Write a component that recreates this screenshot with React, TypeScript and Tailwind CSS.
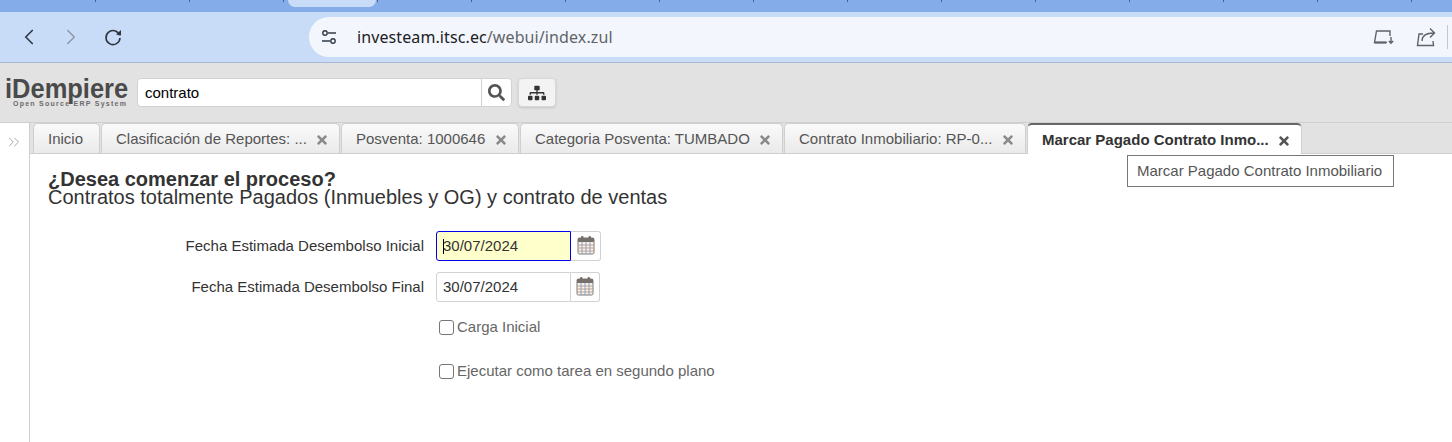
import { ChevronLeft, ChevronRight, ChevronsRight } from "lucide-react";
import { FaSearch, FaSitemap, FaTimes } from "react-icons/fa";

const ticks = [0, 1, 2, 3, 4, 5, 6, 7, 8, 9, 10, 11, 12, 13, 14];

const tabs = [
  { label: "Inicio", width: "w-[67px]", close: false },
  { label: "Clasificación de Reportes: ...", width: "w-[239px]", close: true },
  { label: "Posventa: 1000646", width: "w-[178px]", close: true },
  { label: "Categoria Posventa: TUMBADO", width: "w-[263px]", close: true },
  { label: "Contrato Inmobiliario: RP-0...", width: "w-[242px]", close: true },
];

const CalendarIcon = () => (
  <svg width="18" height="20" viewBox="0 0 18 20" className="mb-[3px]">
    <rect x="1" y="3" width="16" height="16" rx="1.5" fill="#f6f1ea" stroke="#7b7b7b" />
    <rect x="1" y="3" width="16" height="4" fill="#77706a" />
    <rect x="4" y="1" width="2.5" height="4.5" rx="1" fill="#77706a" />
    <rect x="11.5" y="1" width="2.5" height="4.5" rx="1" fill="#77706a" />
    <path d="M1 10h16M1 13h16M1 16h16" stroke="#c59a7a" strokeWidth="0.9" />
    <path d="M5 7v12M9 7v12M13 7v12" stroke="#7f9cc4" strokeWidth="0.9" />
  </svg>
);

const ReloadIcon = () => (
  <svg width="20" height="20" viewBox="0 0 20 20" fill="none">
    <path d="M16.6 8.2A7 7 0 1 0 17 11" stroke="#2f3640" strokeWidth="1.6" />
    <path d="M13 7.5 18 3v5.5z" fill="#2f3640" />
  </svg>
);

const TuneIcon = () => (
  <svg width="16" height="16" viewBox="0 0 16 16" fill="none" stroke="#333b47" strokeWidth="1.4">
    <circle cx="4" cy="4" r="2.2" />
    <path d="M7 4h8M1 12h8" />
    <circle cx="12" cy="12" r="2.2" />
  </svg>
);

const InstallIcon = () => (
  <svg width="22" height="16" viewBox="0 0 22 16" fill="none" stroke="#5f6368" strokeWidth="1.4">
    <path d="M17 7V2H3.5L1.5 13.5H14" />
    <path d="M1.5 13.5H13" strokeWidth="2" />
    <path d="M18 8v6M15.8 12l2.2 2.2 2.2-2.2" />
  </svg>
);

const ShareIcon = () => (
  <svg width="20" height="20" viewBox="0 0 20 20" fill="none" stroke="#5f6368" strokeWidth="1.4">
    <path d="M7 7H3L1.5 18.5h16L17 14" />
    <path d="M6 14c0-5 3-8 12-8M14 1.5 18.5 6 14 10.5" />
  </svg>
);

export default function App() {
  return (
    <div className="w-[1452px] h-[442px] overflow-hidden bg-white flex flex-col font-['Liberation_Sans',sans-serif]">
      <div className="h-3 bg-[#84ace8] flex pl-[2px] relative">
        {ticks.map((t) => (
          <div key={t} className="w-[94px] h-[2px] shrink-0 border-r border-[#4a5f80]"></div>
        ))}
        <div className="absolute left-[288px] top-0 w-[88px] h-[7px] rounded-b-lg bg-[#c9dcf7]"></div>
      </div>

      <div className="h-[50px] bg-[#c9dcf7] border-b border-[#a9b8d4] box-content flex items-center pl-[16px]">
        <ChevronLeft size={26} strokeWidth={1.6} className="text-[#333b47]" />
        <ChevronRight size={26} strokeWidth={1.4} className="text-[#8e99ab] ml-[16px]" />
        <div className="ml-[19px]">
          <ReloadIcon />
        </div>
        <div className="ml-[186px] flex-1 h-10 bg-[#f3f7fd] rounded-l-[20px] flex items-center pl-[12px]">
          <TuneIcon />
          <div className="ml-[20px] text-[16px] text-[#5f6368] font-['Noto_Sans',sans-serif] tracking-[0.1px] flex-1">
            <span className="text-[#202124]">investeam.itsc.ec</span>/webui/index.zul
          </div>
          <InstallIcon />
          <div className="ml-[21px]">
            <ShareIcon />
          </div>
          <div className="ml-[11px] mr-[4px] w-px h-6 bg-[#c4c7cc]"></div>
        </div>
      </div>

      <div className="h-[59px] bg-[#e2e2e2] flex items-center pl-[5px] shrink-0">
        <div className="w-[126px] h-[29px] flex flex-col items-start">
          <div className="text-[28px] leading-[21px] font-bold text-[#4a4a4a] whitespace-nowrap origin-left scale-x-[0.91]">
            iDempiere
          </div>
          <div className="text-[7px] leading-[7px] mt-[1px] font-bold text-[#6b6b6b] tracking-[1.25px] pl-[8px] whitespace-nowrap">
            Open Source ERP System
          </div>
        </div>
        <div className="ml-[6px] w-[375px] h-[29px] bg-white rounded border border-[#d2d2d2] flex items-center">
          <div className="flex-1 pl-[7px] pt-[1px] text-[15px] text-black">contrato</div>
          <div className="w-[30px] h-full border-l border-[#d2d2d2] flex items-center justify-center">
            <FaSearch size={17} className="text-[#555]" />
          </div>
        </div>
        <div className="ml-[6px] w-[38px] h-[29px] rounded bg-[#f3f3f3] border border-[#d8d8d8] shadow-sm flex items-center justify-center">
          <FaSitemap size={18} className="text-[#333]" />
        </div>
      </div>

      <div className="flex-1 flex min-h-0 border-t border-[#cfcfcf]">
        <div className="w-[30px] shrink-0 border-r border-[#cfcfcf] bg-white pt-[10px] pl-[5px]">
          <ChevronsRight size={18} strokeWidth={1} className="text-[#8a8a8a]" />
        </div>
        <div className="flex-1 flex flex-col min-w-0 relative">
          <div className="h-[31px] bg-[#e2e2e2] border-b border-[#cfcfcf] flex items-end pl-[3px] shrink-0">
            {tabs.map((tab) => (
              <div
                key={tab.label}
                className={`${tab.width} h-[30px] mr-[1px] pt-[2px] rounded-t-[5px] border border-b-0 border-[#cfcfcf] bg-gradient-to-b from-[#fafafa] to-[#eaeaea] flex items-center justify-between pl-[14px] pr-[10px] text-[15px] text-[#555] whitespace-nowrap`}
              >
                <span>{tab.label}</span>
                {tab.close && <FaTimes size={14} className="text-[#8a8a8a]" />}
              </div>
            ))}
            <div className="w-[275px] h-[31px] -mb-px pt-[2px] rounded-t-[5px] border border-b-0 border-[#cfcfcf] border-t-2 border-t-[#666] bg-white flex items-center justify-between pl-[14px] pr-[10px] text-[15px] font-bold text-[#333] whitespace-nowrap">
              <span>Marcar Pagado Contrato Inmo...</span>
              <FaTimes size={14} className="text-[#555]" />
            </div>
          </div>

          <div className="absolute left-[1097px] top-[32px] w-[267px] h-[32px] bg-white border border-[#777] flex items-center pl-[9px] text-[15px] text-[#555]">
            Marcar Pagado Contrato Inmobiliario
          </div>

          <div className="flex-1 bg-white pl-[18px] pt-[16px]">
            <div className="text-[20px] leading-[18px] font-bold text-[#333]">¿Desea comenzar el proceso?</div>
            <div className="text-[20px] leading-[18px] text-[#333]">
              Contratos totalmente Pagados (Inmuebles y OG) y contrato de ventas
            </div>

            <div className="mt-[25px] flex items-center h-[30px]">
              <div className="w-[376px] text-right text-[15px] text-[#333]">Fecha Estimada Desembolso Inicial</div>
              <div className="ml-[12px] w-[135px] h-[30px] bg-[#ffffcc] border border-[#0000ee] rounded-l-[3px] flex items-center pl-[6px] text-[15px] text-[#333]">
                <span className="w-px h-[15px] bg-black"></span>
                <span className="-ml-px">30/07/2024</span>
              </div>
              <div className="w-[30px] h-[30px] border border-l-0 border-[#d2d2d2] rounded-r-[3px] flex items-center justify-center">
                <CalendarIcon />
              </div>
            </div>

            <div className="mt-[11px] flex items-center h-[30px]">
              <div className="w-[376px] text-right text-[15px] text-[#333]">Fecha Estimada Desembolso Final</div>
              <div className="ml-[12px] w-[135px] h-[30px] bg-white border border-[#d2d2d2] rounded-l-[3px] flex items-center pl-[6px] text-[15px] text-[#333]">
                30/07/2024
              </div>
              <div className="w-[29px] h-[30px] border border-l-0 border-[#d2d2d2] rounded-r-[3px] flex items-center justify-center">
                <CalendarIcon />
              </div>
            </div>

            <div className="mt-[17px] ml-[391px] flex items-center h-[16px]">
              <div className="w-[15px] h-[15px] rounded-[3px] border border-[#767676] bg-white"></div>
              <span className="ml-[3px] text-[15px] text-[#666]">Carga Inicial</span>
            </div>

            <div className="mt-[28px] ml-[391px] flex items-center h-[16px]">
              <div className="w-[15px] h-[15px] rounded-[3px] border border-[#767676] bg-white"></div>
              <span className="ml-[3px] text-[15px] text-[#666]">Ejecutar como tarea en segundo plano</span>
            </div>
          </div>
        </div>
      </div>
    </div>
  );
}
